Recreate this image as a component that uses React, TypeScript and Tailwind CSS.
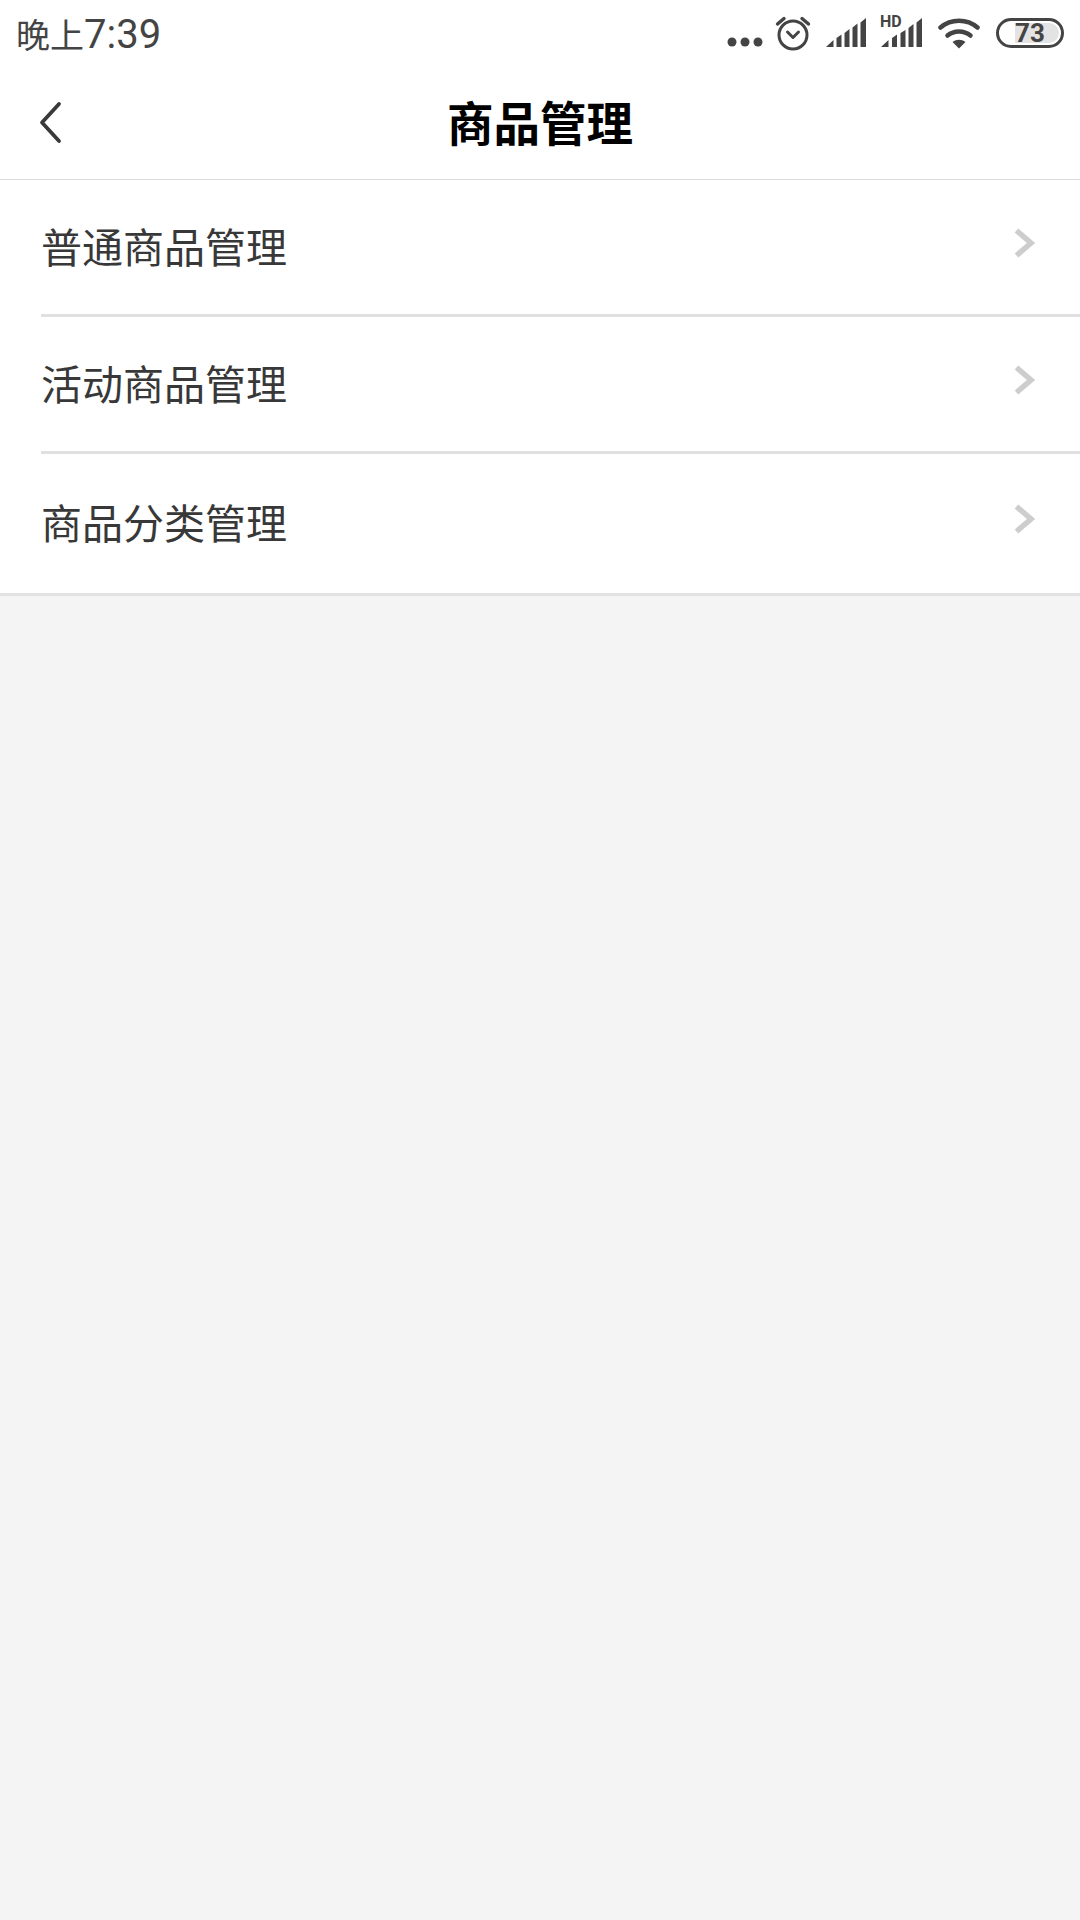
const cjk = "font-['Noto_Sans_CJK_SC','Noto_Sans',sans-serif]";

function StatusIcons() {
  return (
    <div className="flex items-center">
      <svg width="36" height="68" viewBox="727 0 36 68" fill="#444">
        <circle cx="732" cy="42" r="4.500" />
        <circle cx="745" cy="42" r="4.500" />
        <circle cx="758" cy="42" r="4.500" />
      </svg>
      <svg width="36" height="68" viewBox="775 0 36 68" className="ml-[12px]" fill="none" stroke="#444" strokeWidth="3" strokeLinecap="round" strokeLinejoin="round">
        <circle cx="793" cy="35" r="14" />
        <path d="M787.500 32 793 37.500 798.500 32" />
        <path d="M777.500 24 784 18.500M808.500 24 802 18.500" strokeWidth="3.400" />
      </svg>
      <svg width="40" height="68" viewBox="0 0 40 68" className="ml-[15px]" fill="#444">
        <path d="M0 47 7.500 40V47Z" />
        <path d="M10.500 38 15.500 34.500V47H10.500Z" />
        <path d="M18.500 33 23.500 29V47H18.500Z" />
        <path d="M26.500 27.500 31.500 23.500V47H26.500Z" />
        <path d="M34.500 22.500 40 18V47H34.500Z" />
      </svg>
      <div className="relative ml-[15px] w-[42px] h-[68px]">
        <span className="absolute left-[-1px] top-[14px] text-[16px] leading-[16px] font-bold text-[#444] font-['Roboto',sans-serif]">HD</span>
        <svg width="42" height="68" viewBox="0 0 42 68" fill="#444">
          <path d="M0 47 7.500 40V47Z" />
          <path d="M11 38 16 34.500V47H11Z" />
          <path d="M19.500 33 24.500 30V47H19.500Z" />
          <path d="M27.500 28 32.500 24V47H27.500Z" />
          <path d="M35.500 22.500 41 18V47H35.500Z" />
        </svg>
      </div>
      <svg width="42" height="68" viewBox="0 0 42 68" className="ml-[15px]" fill="none" stroke="#444" strokeWidth="4.500" strokeLinecap="round">
        <path d="M2.500 27.500C13 18.500 29 18.500 39.500 27.500" />
        <path d="M9.500 35.500C16 30 26 30 32.500 35.500" />
        <path d="M21 48.500 14.500 42C18.500 39 23.500 39 27.500 42Z" fill="#444" stroke="none" />
      </svg>
      <div className="relative ml-[16px] -mt-[3px] w-[68px] h-[30px] rounded-full border-[3.5px] border-[#444] flex items-center p-[2px] pl-[16px]">
        <div className="relative h-full flex-1 rounded-r-full bg-[#e3e3e3]">
          <span className="absolute left-0 top-1/2 -translate-y-1/2 text-[26px] leading-none font-bold text-[#444] font-['Roboto',sans-serif]">73</span>
        </div>
      </div>
    </div>
  );
}

function Chevron() {
  return (
    <svg width="22" height="32" viewBox="0 0 22 32" fill="none" stroke="#cdcdcd" strokeWidth="5.500">
      <path d="M2.500 3.500 17 16 2.500 28.500" />
    </svg>
  );
}

function Row({ label, last }: { label: string; last?: boolean }) {
  return (
    <div className={last ? "border-b-[3px] border-[#e2e2e2]" : ""}>
      <div className={`${last ? "h-[139px] pb-[2px]" : "h-[134px]"} flex items-center justify-between pl-[41px] pr-[44px]`}>
        <span className={`text-[41px] leading-none -mt-[3px] text-[#383838] ${cjk}`}>{label}</span>
        <div className="-mt-[8px]"><Chevron /></div>
      </div>
      {!last && <div className="ml-[41px] h-[3px] bg-[#e0e0e0]" />}
    </div>
  );
}

export default function App() {
  return (
    <div className="w-[1080px] h-[1920px] bg-[#f4f4f4] flex flex-col overflow-hidden">
      <div className="bg-white">
        <div className="h-[68px] flex items-center justify-between pl-[16px] pr-[16px]">
          <span className="flex items-baseline text-[#444] font-['Roboto','Noto_Sans_CJK_SC',sans-serif] mt-[2px]">
            <span className="text-[34px] leading-none">晚上</span>
            <span className="text-[40px] leading-none">7:39</span>
          </span>
          <StatusIcons />
        </div>
        <div className="relative h-[112px] flex items-center justify-center border-b border-[#dcdcdc]">
          <svg width="26" height="44" viewBox="0 0 26 44" className="absolute left-[38px] top-[33px]" fill="none" stroke="#3a3a3a" strokeWidth="3.800" strokeLinecap="round" strokeLinejoin="round">
            <path d="M21 3 4 21.500 21 40" />
          </svg>
          <span className={`text-[46.5px] leading-none font-bold text-black -mt-[4px] ${cjk}`}>商品管理</span>
        </div>
      </div>
      <div className="bg-white">
        <Row label="普通商品管理" />
        <Row label="活动商品管理" />
        <Row label="商品分类管理" last />
      </div>
    </div>
  );
}
